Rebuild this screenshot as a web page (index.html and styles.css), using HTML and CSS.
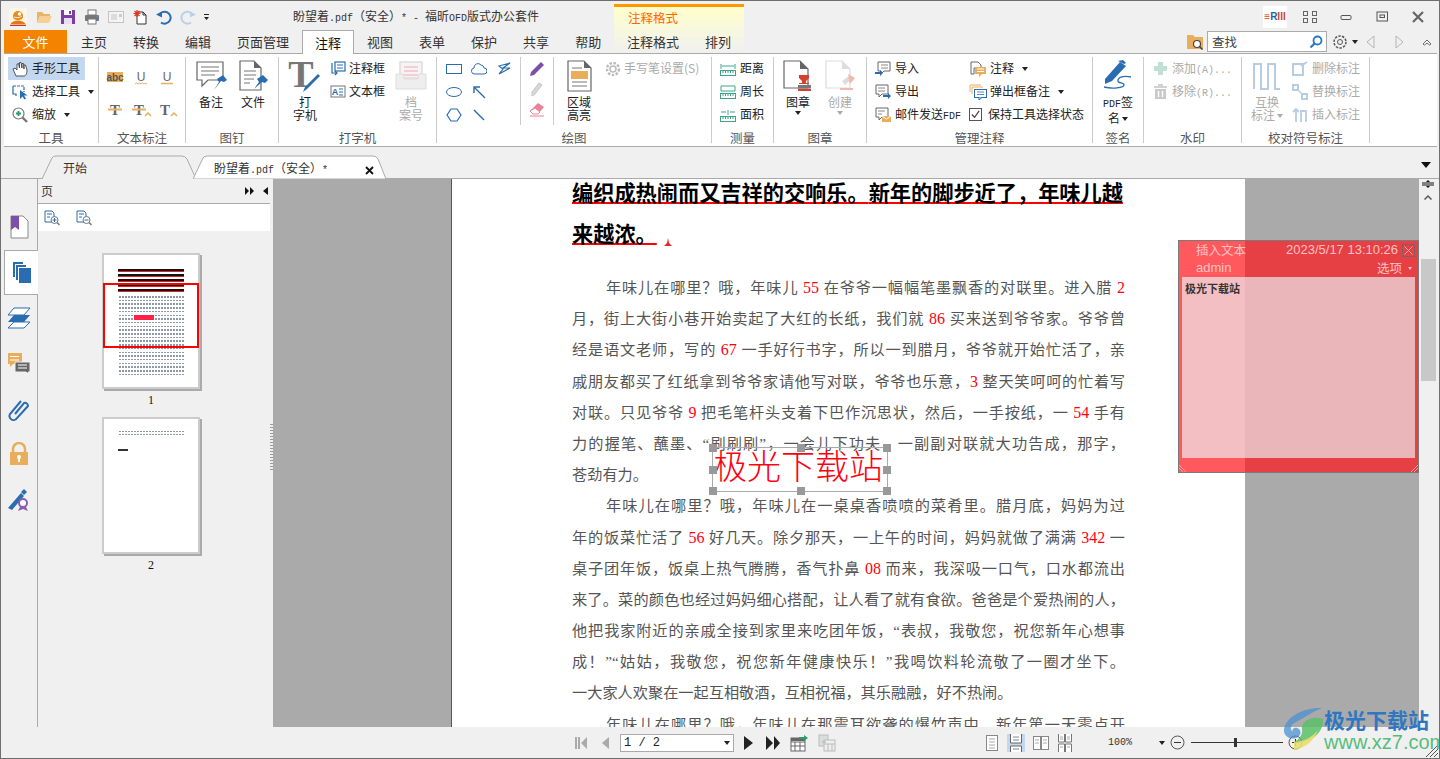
FILE: index.html
```html
<!DOCTYPE html>
<html lang="zh-CN">
<head>
<meta charset="utf-8">
<title>盼望着.pdf(安全)* - 福昕OFD版式办公套件</title>
<link rel="stylesheet" href="styles.css">
</head>
<body>
<div class="app">
  <header class="top">
    <div class="titlebar">
      <svg class="qlogo" viewBox="0 0 18 18"><rect width="18" height="18" rx="2" fill="#fff6e6"/><path d="M4 8a5 5 0 0 1 10 0c0 3-2 4-5 4s-5-1-5-4z" fill="#e88a1a"/><circle cx="10.500" cy="6" r="1.800" fill="#fff"/><path d="M5 9c2 1 6 1 8-1" fill="none" stroke="#fff" stroke-width=".8"/><path d="M1 16.500c2-3 5-4 8-4s6 1 8 4z" fill="#e0781a"/><path d="M1 17.500h16" stroke="#c33"/></svg>
      <svg class="q" viewBox="0 0 16 16"><path d="M1 3h5l2 2h6v2H4L1 14z" fill="#e9b565"/><path d="M4 7h12l-3 7H1z" fill="#f5cf94"/></svg>
      <svg class="q" viewBox="0 0 16 16"><rect x="1" y="1" width="14" height="14" fill="#7d3f9f"/><rect x="4" y="1" width="8" height="5" fill="#fff"/><rect x="9" y="2" width="2" height="3" fill="#7d3f9f"/><rect x="4" y="9" width="8" height="6" fill="#e8dff0"/></svg>
      <svg class="q" viewBox="0 0 16 16"><rect x="4" y="1" width="8" height="5" fill="#fff" stroke="#777"/><rect x="1" y="6" width="14" height="6" rx="1" fill="#777"/><rect x="4" y="10" width="8" height="5" fill="#fff" stroke="#777"/><rect x="12" y="7" width="2" height="1" fill="#4a90d9"/></svg>
      <svg class="q" viewBox="0 0 16 16"><rect x=".5" y="2.5" width="15" height="11" fill="#f4f4f4" stroke="#c4c4c4"/><path d="M3 6h6M3 8h6M3 10h6" stroke="#c4c4c4"/><rect x="11" y="5" width="3" height="3" fill="#ccc"/></svg>
      <svg class="q" viewBox="0 0 16 16"><path d="M5 3h6l3 3v9H5z" fill="#fff" stroke="#333"/><path d="M11 3v3h3" fill="none" stroke="#333"/><path d="M5 1v7M1.500 4.500h7M2.500 2l5 5M7.500 2l-5 5" stroke="#e53323" stroke-width="1.200"/></svg>
      <svg class="q" viewBox="0 0 16 16"><path d="M3 6.500a6 6 0 1 1 2 7" fill="none" stroke="#2a6cb0" stroke-width="2"/><path d="M0 5.500l6-3v6z" fill="#2a6cb0"/></svg>
      <svg class="q" viewBox="0 0 16 16"><path d="M13 6.500a6 6 0 1 0-2 7" fill="none" stroke="#b9d0e6" stroke-width="2"/><path d="M16 5.500l-6-3v6z" fill="#b9d0e6"/></svg>
      <svg class="qdrop" viewBox="0 0 6 8"><path d="M0 1h5v1H0zM0 4h5L2.500 7z" fill="#222"/></svg>
      <span class="doc-title">盼望着<span class="mono">.pdf</span>（安全）<span class="mono">* - </span>福昕<span class="mono">OFD</span>版式办公套件</span>
    </div>
    <nav class="tabs">
      <span class="tab tab-file">文件</span>
      <span class="tab">主页</span><span class="tab">转换</span><span class="tab">编辑</span><span class="tab">页面管理</span>
      <span class="tab tab-on">注释</span>
      <span class="tab">视图</span><span class="tab">表单</span><span class="tab">保护</span><span class="tab">共享</span><span class="tab">帮助</span>
    </nav>
    <div class="ctx">
      <div class="ctx-title">注释格式</div>
      <div class="ctx-tabs"><span class="tab">注释格式</span><span class="tab">排列</span></div>
    </div>
    <div class="winbar">
      <div class="erii"><span class="erii-t"><span class="er">≡</span><span class="eb">R</span><span class="er">III</span></span></div>
      <svg class="win" viewBox="0 0 36 14"><g fill="none" stroke="#666"><rect x="11.500" y="1.500" width="4" height="4"/><rect x="20.500" y="1.500" width="4" height="4"/><rect x="11.500" y="8.500" width="4" height="4"/><rect x="20.500" y="8.500" width="4" height="4"/></g></svg>
      <svg class="win" viewBox="0 0 36 14"><rect x="13" y="5.500" width="10" height="4" rx="1" fill="none" stroke="#555"/></svg>
      <svg class="win" viewBox="0 0 36 14"><rect x="13" y="2" width="10.500" height="9" fill="none" stroke="#555"/><rect x="16" y="5" width="4.500" height="2.500" fill="none" stroke="#555"/></svg>
      <svg class="win" viewBox="0 0 36 14"><path d="M13 2l10 10M23 2L13 12" stroke="#666" stroke-width="2.200"/></svg>
    </div>
    <div class="searchbar">
      <svg class="sfold" viewBox="0 0 18 16"><path d="M1 1h6l2 2h8v12H1z" fill="#e8ae5c"/><circle cx="11" cy="10" r="3.500" fill="#fff" stroke="#444" stroke-width="1.200"/><path d="M13.500 12.500l3 3" stroke="#444" stroke-width="1.600"/></svg>
      <div class="sbox"><span>查找</span><svg class="i14" viewBox="0 0 14 14"><circle cx="8.500" cy="5.500" r="4" fill="#fff" stroke="#2b78c2" stroke-width="1.800"/><path d="M5.500 8.500L1.500 12.500" stroke="#2b78c2" stroke-width="2.200"/></svg></div>
      <svg class="sgear" viewBox="0 0 16 16"><circle cx="8" cy="8" r="2.500" fill="none" stroke="#555"/><circle cx="8" cy="8" r="6" fill="none" stroke="#555" stroke-width="1.500" stroke-dasharray="2.400 1.300"/></svg>
      <span class="caret sc"></span>
      <svg class="snav" viewBox="0 0 9 14"><path d="M8 1L1 7l7 6z" fill="none" stroke="#b5b5b5"/></svg>
      <svg class="snav snav2" viewBox="0 0 9 14"><path d="M1 1l7 6-7 6z" fill="none" stroke="#b5b5b5"/></svg>
      <svg class="snav snav3" viewBox="0 0 10 8"><path d="M1 6l4-4 4 4-1.500 1L5 5 2.500 7z" fill="#fff" stroke="#444" stroke-width=".8"/></svg>
    </div>
  </header>

  <section class="ribbon">
    <div class="grp g1"><div class="gb col">
      <div class="rw hl"><svg class="i16" viewBox="0 0 16 16"><path d="M4 15L1 8l2-1 2 2V3l1.500-.500L7.500 7V1.500H9L10 7V2.500h1.500L12 8V4h1.500L15 9c0 3-1 6-3 6z" fill="#fff" stroke="#444" stroke-width=".9"/></svg>手形工具</div>
      <div class="rw"><svg class="i16" viewBox="0 0 16 16"><path d="M1 2h11v6" fill="none" stroke="#2a6cb0" stroke-width="1.200" stroke-dasharray="3 1"/><path d="M1 2v8h3v2" fill="none" stroke="#2a6cb0" stroke-width="1.200"/><path d="M8 6l0 9 2.500-2.500 2 3 1.500-1-2-3h3.500z" fill="#2a6cb0"/></svg>选择工具<span class="caret c8"></span></div>
      <div class="rw"><svg class="i16" viewBox="0 0 16 16"><circle cx="6.500" cy="6.500" r="5.500" fill="#fff" stroke="#777" stroke-width="1.200"/><path d="M4 6.500h5M6.500 4v5" stroke="#2d9c6a" stroke-width="1.800"/><path d="M10.500 10.500l4.500 4.500" stroke="#777" stroke-width="2.400"/></svg>缩放<span class="caret c8"></span></div>
    </div><div class="gl">工具</div></div>

    <div class="grp g2"><div class="gb markup">
      <svg class="i26" viewBox="0 0 26 26"><rect x="5" y="8" width="16" height="10" fill="#e8ae5c"/><text x="13" y="16.500" class="svt-b">abc</text></svg>
      <svg class="i26" viewBox="0 0 26 26"><text x="13" y="17" class="svt-u">U</text><path d="M7 20l1.500-1 1.500 1 1.500-1 1.500 1 1.500-1 1.500 1 1.500-1 1.500 1" fill="none" stroke="#e8ae5c"/></svg>
      <svg class="i26" viewBox="0 0 26 26"><text x="13" y="17" class="svt-u">U</text><path d="M7 19.500h12" stroke="#e8ae5c" stroke-width="1.500"/></svg>
      <svg class="i26" viewBox="0 0 26 26"><text x="13" y="19" class="svt-t">T</text><path d="M6 13.500h14" stroke="#e8ae5c" stroke-width="2"/></svg>
      <svg class="i26" viewBox="0 0 26 26"><text x="11" y="19" class="svt-t">T</text><path d="M4 13.500h14" stroke="#e8ae5c" stroke-width="2"/><path d="M17 20l3-3 3 3" fill="none" stroke="#e8ae5c" stroke-width="1.500"/></svg>
      <svg class="i26" viewBox="0 0 26 26"><text x="11" y="19" class="svt-t">T</text><path d="M17 20l3-3 3 3" fill="none" stroke="#e8ae5c" stroke-width="1.500"/></svg>
    </div><div class="gl">文本标注</div></div>

    <div class="grp g3"><div class="gb row">
      <div class="big"><svg class="i32" viewBox="0 0 32 32"><path d="M2 2h26v18H13l-6 6v-6H2z" fill="#fff" stroke="#666" stroke-width="1.200"/><path d="M6 7h18M6 11h18M6 15h14" stroke="#777"/><path d="M19 30l5-8-2-3 6-4 4 5-3 2-3-1z" fill="#2a6cb0"/></svg><span>备注</span></div>
      <div class="big"><svg class="i32" viewBox="0 0 32 32"><path d="M3 1h14l7 7v22H3z" fill="#fff" stroke="#666" stroke-width="1.200"/><path d="M17 1v7h7z" fill="#666"/><path d="M7 11h12M7 15h12M7 19h10M7 23h6" stroke="#777"/><path d="M17 29l5-7-2-3 6-4 5 5-3 3-3-1z" fill="#2a6cb0"/></svg><span>文件</span></div>
    </div><div class="gl">图钉</div></div>

    <div class="grp g4"><div class="gb row">
      <div class="big"><svg class="i32" viewBox="0 0 32 32"><text x="12" y="27" class="svt-big">T</text><path d="M14 32l2-5 13-13 2 2-13 13z" fill="#2a6cb0"/></svg><span>打<br>字机</span></div>
      <div class="col smcol">
        <div class="rw gap3"><svg class="i16" viewBox="0 0 16 16"><rect x="5" y="1" width="10" height="9" fill="#fff" stroke="#2a6cb0" stroke-width="1.200"/><path d="M7 4h6M7 7h6" stroke="#2a6cb0"/><path d="M2 2v10h5M5 10l2 2-2 2" fill="none" stroke="#2a6cb0" stroke-width="1.200"/></svg>注释框</div>
        <div class="rw gap3"><svg class="i16" viewBox="0 0 16 16"><rect x="1" y="2" width="14" height="11" fill="#fff" stroke="#777"/><text x="5" y="11" class="svt-a">A</text><path d="M9 5h4M9 8h4M9 11h4" stroke="#2a6cb0"/></svg>文本框</div>
      </div>
      <div class="big dis"><svg class="i32" viewBox="0 0 32 32"><path d="M5 2h22v16H5z" fill="#f4f4f4" stroke="#ddd" stroke-width="1.500"/><path d="M9 7h14M9 11h14M9 15h14" stroke="#f3c0cb" stroke-width="1.500"/><path d="M1 14h7l1 5h14l1-5h7v15H1z" fill="#eee" stroke="#ddd"/></svg><span>档<br>案号</span></div>
    </div><div class="gl">打字机</div></div>

    <div class="grp g5"><div class="gb row">
      <div class="shapes">
        <svg class="i16" viewBox="0 0 16 16"><rect x=".500" y="3.500" width="15" height="9" fill="#fff" stroke="#2a6cb0"/></svg>
        <svg class="i16" viewBox="0 0 16 16"><path d="M4 13a3 3 0 0 1-1-6 4 4 0 0 1 7-3 3.500 3.500 0 0 1 3 3 3 3 0 0 1 0 6z" fill="#fff" stroke="#2a6cb0"/></svg>
        <svg class="i16" viewBox="0 0 16 16"><path d="M3 5l11-3-7 5 7 0-11 6 4-5z" fill="#fff" stroke="#2a6cb0" stroke-width="1.200"/></svg>
        <svg class="i16" viewBox="0 0 16 16"><ellipse cx="8" cy="8" rx="7.500" ry="4.500" fill="#fff" stroke="#2a6cb0"/></svg>
        <svg class="i16" viewBox="0 0 16 16"><path d="M14 14L4 4M3 9V3h6" fill="none" stroke="#2a6cb0" stroke-width="1.400"/></svg>
        <span class="blank"></span>
        <svg class="i16" viewBox="0 0 16 16"><path d="M5 2h6l4 6-4 6H5L1 8z" fill="#fff" stroke="#2a6cb0" stroke-width="1.200"/></svg>
        <svg class="i16" viewBox="0 0 16 16"><path d="M3 3l10 10" stroke="#2a6cb0" stroke-width="1.400"/></svg>
      </div>
      <div class="pens">
        <svg class="i16" viewBox="0 0 16 16"><path d="M1 15l1-4L12 1l3 3L5 14z" fill="#7d4fa8"/></svg>
        <svg class="i16" viewBox="0 0 16 16"><path d="M3 15l0-4 7-9 3 2-7 9z" fill="#d8d8d8" stroke="#c4c4c4"/></svg>
        <svg class="i16" viewBox="0 0 16 16"><path d="M1 10l8-8 6 4-6 7H4z" fill="#ec8297"/><path d="M1 10l3 3h5l2-2-5-4z" fill="#fff" stroke="#ec8297"/><path d="M1 15h14" stroke="#ec8297"/></svg>
      </div>
      <div class="big area"><svg class="i32" viewBox="0 0 32 32"><path d="M5 1h16l7 7v23H5z" fill="#fff" stroke="#666" stroke-width="1.200"/><path d="M21 1v7h7z" fill="#666"/><rect x="8" y="11" width="17" height="8" fill="#e8ae5c"/><path d="M9 8h10M9 22h15M9 26h15" stroke="#777"/></svg><span>区域<br>高亮</span></div>
      <div class="rw dis gap3 pen-set"><svg class="i16" viewBox="0 0 16 16"><circle cx="8" cy="8" r="3" fill="none" stroke="#bbb" stroke-width="1.500"/><circle cx="8" cy="8" r="6" fill="none" stroke="#bbb" stroke-width="2.400" stroke-dasharray="2.500 1.500"/></svg>手写笔设置(S)</div>
    </div><div class="gl">绘图</div></div>

    <div class="grp g6"><div class="gb col">
      <div class="rw"><svg class="i16" viewBox="0 0 16 16"><use href="#ruler"/><path d="M1 3v5M15 3v5M2 5h12" stroke="#3da585"/></svg>距离</div>
      <div class="rw"><svg class="i16" viewBox="0 0 16 16"><use href="#ruler"/><path d="M1 2h14v5H1z" fill="none" stroke="#3da585"/></svg>周长</div>
      <div class="rw"><svg class="i16" viewBox="0 0 16 16"><use href="#ruler"/><path d="M1 5h5M10 5h5M8 3v5" stroke="#3da585"/></svg>面积</div>
    </div><div class="gl">测量</div></div>

    <div class="grp g7"><div class="gb row">
      <div class="big"><svg class="i32" viewBox="0 0 32 32"><path d="M2 1h16l8 8v19H2z" fill="#fff" stroke="#666" stroke-width="1.200"/><path d="M18 1v8h8z" fill="#666"/><path d="M17 15h10v3l-3 3v2h3v1H17v-1h3v-2l-3-3z" fill="#d5402f"/><rect x="16" y="25" width="13" height="3.500" fill="#777"/><rect x="16" y="29" width="13" height="2" fill="#d5402f"/></svg><span>图章</span><span class="caret c0"></span></div>
      <div class="big dis"><svg class="i32" viewBox="0 0 32 32"><path d="M2 1h16l8 8v19H2z" fill="#fff" stroke="#ddd" stroke-width="1.200"/><path d="M18 1v8h8z" fill="#ddd"/><path d="M18 21l7-5 3 3-7 6z" fill="#ddd"/><path d="M24 14l7 4-5 6z" fill="#f2b9ab"/><path d="M16 29h13" stroke="#f2b9ab" stroke-width="2"/></svg><span>创建</span><span class="caret c0 cg"></span></div>
    </div><div class="gl">图章</div></div>

    <div class="grp g8"><div class="gb row">
      <div class="col mcol">
        <div class="rw"><svg class="i16" viewBox="0 0 16 16"><path d="M3 1h12v9H9l-3 3v-3H3z" fill="#fff" stroke="#666"/><path d="M0 11h5V9l3 3-3 3v-2H0z" fill="#2a6cb0"/><path d="M6 4h7M6 7h7" stroke="#888"/></svg>导入</div>
        <div class="rw"><svg class="i16" viewBox="0 0 16 16"><path d="M1 1h12v9H7l-3 3v-3H1z" fill="#fff" stroke="#666"/><path d="M8 11h5V9l3 3-3 3v-2H8z" fill="#2a6cb0"/><path d="M3 4h7M3 7h7" stroke="#888"/></svg>导出</div>
        <div class="rw"><svg class="i16" viewBox="0 0 16 16"><path d="M1 1h12v9H7l-3 3v-3H1z" fill="#fff" stroke="#666"/><rect x="7" y="9" width="9" height="6" fill="#e8ae5c"/><path d="M7 9l4.500 3L16 9" fill="none" stroke="#fff"/><path d="M3 4h7M3 7h4" stroke="#888"/></svg><span>邮件发送<span class="mono">FDF</span></span></div>
      </div>
      <div class="col">
        <div class="rw gap3"><svg class="i18" viewBox="0 0 18 16"><path d="M2 1h7l3 3v3H5v6H2z" fill="#fff" stroke="#666"/><rect x="6" y="6" width="11" height="7" fill="#e8ae5c"/><path d="M8 8h7M8 10.500h7" stroke="#fff"/><path d="M10 13v3l3-3" fill="#e8ae5c"/></svg>注释<span class="caret c5"></span></div>
        <div class="rw gap3"><svg class="i18" viewBox="0 0 18 16"><path d="M1 1h11M1 1v7M3 3h11M3 3v7" fill="none" stroke="#e8ae5c"/><rect x="5.500" y="5.500" width="12" height="8" fill="#fff" stroke="#2a6cb0"/><path d="M8 8h7M8 10.500h7" stroke="#2a6cb0" stroke-width=".8"/><path d="M10 13.500v2.500l3-2.500" fill="#fff" stroke="#2a6cb0"/></svg>弹出框备注<span class="caret c5"></span></div>
        <div class="rw chk"><span class="box"><svg viewBox="0 0 12 12"><path d="M2 6l3 3 5-7" fill="none" stroke="#444" stroke-width="1.300"/></svg></span>保持工具选择状态</div>
      </div>
    </div><div class="gl">管理注释</div></div>

    <div class="grp g9"><div class="gb row">
      <div class="big wide"><svg class="i32" viewBox="0 0 32 32"><path d="M3 19L18 2l6 4-14 15-7 3z" fill="#2a6cb0"/><path d="M16 1l5-1 3 3-2 1z" fill="#2a6cb0"/><path d="M2 27c8 2 20 1 20-2s-7-1-6-5 8-4 13-3" fill="none" stroke="#2a6cb0" stroke-width="1.300"/></svg><span><span class="mono">PDF</span>签<br>名<span class="caret c2"></span></span></div>
    </div><div class="gl">签名</div></div>

    <div class="grp g10"><div class="gb col">
      <div class="rw dis"><svg class="i15" viewBox="0 0 15 15"><path d="M5 1h5v4h4v5h-4v4H5v-4H1V5h4z" fill="#bfe0d3"/></svg><span>添加<span class="mono">(A)...</span></span></div>
      <div class="rw dis"><svg class="i15" viewBox="0 0 15 15"><path d="M1 3h13M5 1h5" stroke="#c4c4c4" stroke-width="1.500"/><path d="M2 5h11v10H2z" fill="#c8c8c8"/><path d="M5.500 7v6M9.500 7v6" stroke="#fff" stroke-width="1.500"/></svg><span>移除<span class="mono">(R)...</span></span></div>
    </div><div class="gl">水印</div></div>

    <div class="grp g11"><div class="gb row">
      <div class="big dis"><svg class="i32" viewBox="0 0 32 32"><path d="M3 29V4h7v25h7V4h7v25h5" fill="none" stroke="#b8cde4" stroke-width="2"/></svg><span>互换<br>标注<span class="caret c2 cg"></span></span></div>
      <div class="col prf">
        <div class="rw dis"><svg class="i16" viewBox="0 0 16 16"><rect x="1" y="3" width="10" height="11" fill="none" stroke="#b8cde4" stroke-width="2"/><path d="M9 5l6-4" stroke="#b8cde4" stroke-width="2"/></svg>删除标注</div>
        <div class="rw dis"><svg class="i16" viewBox="0 0 16 16"><rect x="1" y="1" width="5" height="5" fill="none" stroke="#b8cde4" stroke-width="2"/><rect x="10" y="10" width="5" height="5" fill="none" stroke="#b8cde4" stroke-width="2"/><path d="M6 6l4 4" stroke="#b8cde4" stroke-width="1.500"/></svg>替换标注</div>
        <div class="rw dis"><svg class="i16" viewBox="0 0 16 16"><path d="M4 15V3M1 5l3-3 3 3M9 15V4h5v11" fill="none" stroke="#b8cde4" stroke-width="1.800"/></svg>插入标注</div>
      </div>
    </div><div class="gl">校对符号标注</div></div>
    <svg class="defs" viewBox="0 0 16 16"><defs><g id="ruler"><rect x=".5" y="9.500" width="15" height="5" fill="none" stroke="#3da585"/><path d="M3 10v2M5.500 10v2M8 10v2M10.500 10v2M13 10v2" stroke="#3da585"/></g></defs></svg>
  </section>

  <div class="doctabs">
    <div class="dt dt1"><svg class="dt-bg" viewBox="0 0 154 24" preserveAspectRatio="none"><path d="M0 24L10 3Q11 1 14 1H140Q143 1 145 4L154 24" fill="#f0f0f0" stroke="#aaa"/></svg><span class="dt-t">开始</span></div>
    <div class="dt dt2"><svg class="dt-bg" viewBox="0 0 194 24" preserveAspectRatio="none"><path d="M0 24L10 3Q11 1 14 1H180Q183 1 185 4L193 24Z" fill="#fff" stroke="#aaa"/></svg><span class="dt-t">盼望着<span class="mono">.pdf</span>（安全）<span class="mono">*</span></span><svg class="dt-x" viewBox="0 0 9 9"><path d="M1 1l7 7M8 1L1 8" stroke="#111" stroke-width="1.800"/></svg></div>
    <span class="caret dt-arrow"></span>
  </div>

  <main class="main">
    <aside class="rail">
      <div class="ri"><svg class="i20" viewBox="0 0 20 24"><path d="M2 1h12l5 5v17H2z" fill="#fff" stroke="#888"/><path d="M2 1h8v14l-4-3-4 3z" fill="#7d4fa8"/></svg></div>
      <div class="ri ri-on"><svg class="i20" viewBox="0 0 20 22"><path d="M1 1h10v2H3v13H1z" fill="#2a6cb0"/><path d="M4 4h10v2H6v13H4z" fill="#2a6cb0"/><rect x="7" y="7" width="12" height="15" fill="#2a6cb0"/></svg></div>
      <div class="ri"><svg class="i24" viewBox="0 0 24 22"><path d="M7 1h16l-6 7H1zM7 15h16l-6 6H1z" fill="#fff" stroke="#2a6cb0"/><path d="M7 8h16l-6 7H1z" fill="#2a6cb0"/></svg></div>
      <div class="ri"><svg class="i24" viewBox="0 0 24 22"><path d="M1 1h14v11H6l-3 3v-3H1z" fill="#e8ae5c"/><path d="M3 4.500h9M3 8h9" stroke="#fff"/><path d="M8 10h15v10h-2v2l-2-2H8z" fill="#666" stroke="#f0f0f0"/><path d="M11 13h9M11 16h9" stroke="#fff"/></svg></div>
      <div class="ri"><svg class="i24" viewBox="0 0 24 24"><path d="M8 17l9-11a3 3 0 0 1 4 3L10 21a4 4 0 0 1-7-4L14 4" fill="none" stroke="#2a6cb0" stroke-width="2"/></svg></div>
      <div class="ri"><svg class="i20" viewBox="0 0 20 24"><path d="M4 11V7a6 6 0 0 1 12 0v4" fill="none" stroke="#e8ae5c" stroke-width="2.500"/><rect x="1" y="10" width="18" height="13" fill="#e8ae5c"/><circle cx="10" cy="15" r="2" fill="#fff"/><rect x="9" y="15" width="2" height="5" fill="#fff"/></svg></div>
      <div class="ri"><svg class="i24" viewBox="0 0 24 24"><path d="M1 20L14 5l3 3L5 22z" fill="#2a6cb0"/><path d="M14 4l3-3 3 3-3 3z" fill="#2a6cb0"/><circle cx="16" cy="15" r="4" fill="#fff" stroke="#8a5cb0" stroke-width="2"/><path d="M13 19l-2 4 5-2 5 2-2-4" fill="#8a5cb0"/></svg></div>
    </aside>
    <section class="panel">
      <div class="ph"><span class="ph-t">页</span><svg class="ph-a" viewBox="0 0 9 8"><path d="M0 0l4 4-4 4zM5 0l4 4-4 4z" fill="#111"/></svg><svg class="ph-b" viewBox="0 0 5 8"><path d="M5 0L0 4l5 4z" fill="#111"/></svg></div>
      <div class="pt">
        <svg class="i16" viewBox="0 0 16 16"><path d="M1 1h7l2 2v9H1z" fill="#fff" stroke="#2a6cb0"/><path d="M3 4h5M3 7h3" stroke="#2a6cb0"/><circle cx="10.500" cy="10" r="3.500" fill="#fff" stroke="#777"/><path d="M8.500 10h4M10.500 8v4" stroke="#2a6cb0"/><path d="M13 12.500l2.500 2.500" stroke="#777" stroke-width="1.400"/></svg>
        <svg class="i16" viewBox="0 0 16 16"><path d="M1 1h7l2 2v9H1z" fill="#fff" stroke="#2a6cb0"/><path d="M3 4h5M3 7h3" stroke="#2a6cb0"/><circle cx="10.500" cy="10" r="3.500" fill="#fff" stroke="#777"/><path d="M8.500 10h4" stroke="#2a6cb0"/><path d="M13 12.500l2.500 2.500" stroke="#777" stroke-width="1.400"/></svg>
      </div>
      <div class="thumbs">
        <div class="th">
          <div class="th-h"></div><div class="th-bd"><div class="th-mark"></div></div>
          <div class="th-view"></div>
        </div>
        <div class="th-n">1</div>
        <div class="th th2"><div class="th-l1"></div><div class="th-l2"></div></div>
        <div class="th-n">2</div>
      </div>
    </section>
    <div class="split"><span class="dots"></span></div>
    <section class="docarea">
      <article class="page">
        <h1 class="hd"><span class="wv">编织成热闹而又吉祥的交响乐。</span><span class="wv">新年的脚步近了，年味儿越</span><br><span class="wv">来越浓。</span><svg class="ins" viewBox="0 0 8 8"><path d="M4 0l1 5 3 3H0l3-3z" fill="#e22"/></svg></h1>
        <div class="bd">
          <div class="ln ind">年味儿在哪里？哦，年味儿 <b>55</b> 在爷爷一幅幅笔墨飘香的对联里。进入腊 <b>2</b></div>
          <div class="ln">月，街上大街小巷开始卖起了大红的长纸，我们就 <b>86</b> 买来送到爷爷家。爷爷曾</div>
          <div class="ln">经是语文老师，写的 <b>67</b> 一手好行书字，所以一到腊月，爷爷就开始忙活了，亲</div>
          <div class="ln">戚朋友都买了红纸拿到爷爷家请他写对联，爷爷也乐意，<b>3</b> 整天笑呵呵的忙着写</div>
          <div class="ln">对联。只见爷爷 <b>9</b> 把毛笔杆头支着下巴作沉思状，然后，一手按纸，一 <b>54</b> 手有</div>
          <div class="ln">力的握笔、蘸墨、“刷刷刷”，一会儿下功夫，一副副对联就大功告成，那字，</div>
          <div class="ln end">苍劲有力。</div>
          <div class="ln ind">年味儿在哪里？哦，年味儿在一桌桌香喷喷的菜肴里。腊月底，妈妈为过</div>
          <div class="ln">年的饭菜忙活了 <b>56</b> 好几天。除夕那天，一上午的时间，妈妈就做了满满 <b>342</b> 一</div>
          <div class="ln">桌子团年饭，饭桌上热气腾腾，香气扑鼻 <b>08</b> 而来，我深吸一口气，口水都流出</div>
          <div class="ln">来了。菜的颜色也经过妈妈细心搭配，让人看了就有食欲。爸爸是个爱热闹的人，</div>
          <div class="ln">他把我家附近的亲戚全接到家里来吃团年饭，“表叔，我敬您，祝您新年心想事</div>
          <div class="ln">成！”“姑姑，我敬您，祝您新年健康快乐！”我喝饮料轮流敬了一圈才坐下。</div>
          <div class="ln end">一大家人欢聚在一起互相敬酒，互相祝福，其乐融融，好不热闹。</div>
          <div class="ln ind">年味儿在哪里？哦，年味儿在那震耳欲聋的爆竹声中。新年第一天零点开</div>
        </div>
      </article>
    </section>
    <div class="vscroll">
      <svg class="vs-split" viewBox="0 0 12 8"><path d="M0 3h12M0 5h12" stroke="#111"/><path d="M6 0l2 2H4zM6 8l2-2H4z" fill="#111"/></svg>
      <svg class="vs-up" viewBox="0 0 8 6"><path d="M0 5l4-4 4 4-1 1-3-3-3 3z" fill="#555"/></svg>
      <div class="vs-thumb"></div>
    </div>

    <div class="tbox">极光下载站<i class="h h1"></i><i class="h h2"></i><i class="h h3"></i><i class="h h4"></i><i class="h h5"></i><i class="h h6"></i><i class="h h7"></i><i class="h h8"></i></div>

    <div class="note">
      <div class="nr1"><span class="nt">插入文本</span><span class="nd">2023/5/17 13:10:26</span><svg class="nx" viewBox="0 0 13 13"><rect x=".5" y=".5" width="12" height="12" fill="none" stroke="#8a5a60"/><path d="M2.500 2.500l8 8M10.500 2.500l-8 8" stroke="#ffc0c0" stroke-width=".8"/></svg></div>
      <div class="nr2"><span class="na">admin</span><span class="no">选项</span><span class="caret nc"></span></div>
      <div class="nb">极光下载站</div>
      <div class="nf"><svg class="ng" viewBox="0 0 8 8"><path d="M0 1l7 7M0 4l4 4" stroke="#ffb5b5" stroke-width=".8"/></svg><svg class="ng" viewBox="0 0 8 8"><path d="M8 1L1 8M8 4L4 8" stroke="#ffb5b5" stroke-width=".8"/></svg></div>
    </div>
  </main>

  <footer class="status">
    <div class="st nav">
      <svg class="s16" viewBox="0 0 16 16"><path d="M1 2h2v12H1zM4 2h2v12H4zM13 2v12L7 8z" fill="#aaa"/></svg>
      <svg class="s10" viewBox="0 0 10 16"><path d="M9 2v12L2 8z" fill="#aaa"/></svg>
      <div class="pg"><span>1 / 2</span><span class="caret pgc"></span></div>
      <svg class="s10" viewBox="0 0 10 16"><path d="M0 1v14l9-7z" fill="#222"/></svg>
      <svg class="s16" viewBox="0 0 16 16"><path d="M2 1v14l7-7zM10 1l6 7-6 7z" fill="#222"/></svg>
      <svg class="s18" viewBox="0 0 18 18"><rect x="1" y="4" width="14" height="13" fill="#fff" stroke="#666"/><path d="M1 8h14M5 8v9M10 8v9M1 12h14" stroke="#666"/><rect x="1" y="4" width="14" height="3" fill="#666"/><path d="M9 3h5V1l4 3-4 3V5H9z" fill="#2d9c6a"/></svg>
      <svg class="s18" viewBox="0 0 18 18"><rect x="1" y="1" width="9" height="11" fill="#ddd" stroke="#bbb"/><rect x="6" y="6" width="11" height="11" fill="#eee" stroke="#bbb"/><path d="M6 10h11M10 10v7M14 10v7" stroke="#bbb"/><path d="M4 8h4" stroke="#9cd0b8" stroke-width="1.500"/></svg>
    </div>
    <div class="st views">
      <svg class="s16" viewBox="0 0 16 18"><rect x="2.500" y="1.500" width="11" height="15" fill="#fff" stroke="#888"/><path d="M5 5h6M5 8h6M5 11h6M5 14h6" stroke="#aaa"/></svg>
      <div class="v-on"><svg class="s16" viewBox="0 0 16 18"><path d="M2.500 0v9h11V0M2.500 18v-6h11v6" fill="#fff" stroke="#666"/><path d="M5 3h6M5 6h6M5 15h6" stroke="#888"/></svg></div>
      <svg class="s18" viewBox="0 0 18 18"><rect x="1.500" y="2.500" width="7" height="13" fill="#fff" stroke="#888"/><rect x="9.500" y="2.500" width="7" height="13" fill="#fff" stroke="#888"/><path d="M3 6h4M3 9h4M11 6h4M11 9h4" stroke="#aaa"/></svg>
      <svg class="s16" viewBox="0 0 16 18"><path d="M1.500 0v8h6V0M8.500 0v8h6V0M1.500 18v-8h6v8M8.500 18v-8h6v8" fill="#fff" stroke="#777"/><path d="M3 3h3M3 5h3M10 3h3M10 5h3M3 13h3M10 13h3" stroke="#aaa"/></svg>
    </div>
    <span class="pct">100%</span>
    <span class="caret zc"></span>
    <svg class="zb" viewBox="0 0 15 15"><circle cx="7.500" cy="7.500" r="6.500" fill="none" stroke="#555"/><path d="M4 7.500h7" stroke="#333"/></svg>
    <div class="slider"><i></i></div>
    <svg class="zb" viewBox="0 0 15 15"><circle cx="7.500" cy="7.500" r="6.500" fill="none" stroke="#555"/><path d="M4 7.500h7M7.500 4v7" stroke="#333"/></svg>
    <svg class="grip" viewBox="0 0 12 12"><path d="M0 12L12 0M4 12l8-8M8 12l4-4" stroke="#555"/></svg>
  </footer>

  <div class="wm">
    <svg class="wm-logo" viewBox="0 0 44 46"><path d="M40 1C22 0 4 10 2 22c-1 8 8 12 14 8 4-3 3-8-1-9-3-1-6 2-4 4-4-3-2-8 3-10C22 11 30 5 40 1z" fill="#4a90d0" opacity=".75"/><path d="M41 12C30 8 19 14 20 22c1 5-2 10-8 13 12 2 30-6 29-23z" fill="#5bbf68" opacity=".85"/><path d="M12 35c8 0 18-4 24-12-3 9-12 18-24 20z" fill="#e9dd6a" opacity=".9"/></svg>
    <div class="wm-tx"><div class="wm-a">极光下载站</div><div class="wm-b">www.xz7.com</div></div>
  </div>
</div>
</body>
</html>
```

FILE: styles.css
```css
* { box-sizing: border-box; }
html, body { margin: 0; height: 100%; overflow: hidden; }
body { font: 12px/1.2 "Noto Sans CJK SC", "Noto Sans", sans-serif; color: #222; background: #f0f0f0; }
svg { display: block; flex: none; }
.mono { font-family: "Liberation Mono", monospace; font-size: 10px; }
.app { position: relative; width: 1440px; height: 759px; overflow: hidden; display: flex; flex-direction: column; border: 1px solid #6e6e6e; background: #f0f0f0; }

/* top area */
.top { display: grid; grid-template-columns: 613px 130px 1fr; grid-template-rows: 29px 23px; flex: none; height: 52px; }
.titlebar { display: flex; align-items: center; padding: 3px 0 0 8px; gap: 8px; }
.qlogo { width: 18px; height: 18px; margin-right: 1px; }
.q { width: 16px; height: 16px; }
.qdrop { width: 6px; height: 8px; }
.doc-title { margin-left: 75px; font-size: 12px; color: #333; white-space: nowrap; }
.tabs { grid-column: 1; grid-row: 2; display: flex; padding-left: 3px; position: relative; z-index: 2; }
.tab { flex: none; padding: 0 13px; font-size: 13px; line-height: 23px; height: 23px; color: #333; white-space: nowrap; }
.tab-file { width: 63px; background: #f38300; color: #fff; text-align: center; padding: 0; margin-right: 1px; }
.tab-on { background: #fff; border: 1px solid #aaa; border-bottom: 0; padding: 0 12px; height: 24px; width: 52px; color: #111; position: relative; z-index: 3; }
.ctx { grid-column: 2; grid-row: 1 / span 2; margin-top: 3px; border-top: 3px solid #f90; background: linear-gradient(#ffffcc, #f0f0f0); }
.ctx-title { height: 23px; padding-left: 14px; line-height: 22px; color: #f60; font-size: 12.500px; }
.ctx-tabs { display: flex; }
.winbar { grid-column: 3; grid-row: 1; display: flex; justify-content: flex-end; align-items: center; padding: 3px 3px 0 0; }
.erii { width: 24px; height: 22px; background: #fff; margin-right: 5px; display: flex; align-items: center; justify-content: center; }
.erii-t { font: bold 10px/1 "Liberation Sans", sans-serif; white-space: nowrap; }
.er { color: #d5452a; }
.eb { color: #1f5fa8; }
.win { width: 36px; height: 14px; }
.searchbar { grid-column: 3; grid-row: 2; display: flex; align-items: center; padding-left: 442px; }
.sfold { width: 18px; height: 16px; margin-right: 3px; }
.sbox { width: 120px; height: 21px; background: #fff; border: 1px solid #aaa; display: flex; align-items: center; justify-content: space-between; padding: 0 3px 0 4px; font-size: 12.500px; color: #444; }
.i14 { width: 14px; height: 14px; }
.sgear { width: 16px; height: 16px; margin-left: 5px; }
.sc { margin-left: 4px; }
.snav { width: 9px; height: 14px; margin-left: 8px; }
.snav2 { margin-left: 20px; }
.snav3 { width: 10px; height: 8px; margin-left: 18px; }
.caret { display: inline-block; width: 0; height: 0; border: 3px solid transparent; border-top: 4px solid #222; border-bottom: 0; flex: none; }

/* ribbon */
.ribbon { flex: none; height: 94px; margin: 0 2px 0 3px; background: #fff; border-top: 1px solid #aaa; border-bottom: 1px solid #aaa; display: flex; position: relative; }
.defs { width: 0; height: 0; }
.grp { flex: none; height: 86px; margin-top: 3px; border-right: 1px solid #ccc; display: flex; flex-direction: column; }
.gb { height: 73px; flex: none; }
.gl { text-align: center; line-height: 16px; height: 13px; color: #555; font-size: 12.500px; white-space: nowrap; }
.row { display: flex; }
.col { display: flex; flex-direction: column; }
.g1 { width: 95px; } .g1 .gb { padding-left: 4px; }
.g2 { width: 87px; }
.g3 { width: 93px; } .g3 .gb { padding-left: 4px; }
.g4 { width: 158px; } .g4 .gb { padding-left: 5px; }
.g5 { width: 275px; } .g5 .gb { padding-left: 4px; }
.g6 { width: 62px; } .g6 .gb { padding-left: 8px; }
.g7 { width: 93px; } .g7 .gb { padding-left: 3px; }
.g8 { width: 226px; } .g8 .gb { padding-left: 8px; }
.g9 { width: 51px; }
.g10 { width: 98px; } .g10 .gb { padding-left: 9px; }
.g11 { width: 128px; } .g11 .gb { padding-left: 4px; }
.rw { display: flex; align-items: center; height: 23px; gap: 4px; white-space: nowrap; color: #222; }
.gap3 { gap: 3px; }
.hl { background: #c3d7f0; width: 77px; padding-left: 4px; }
.g1 .rw:not(.hl) { padding-left: 4px; }
.c8 { margin-left: 4px; }
.c5 { margin-left: 5px; }
.c2 { margin-left: 2px; vertical-align: 2px; }
.c0 { display: block; margin: 3px auto 0; }
.cg { border-top-color: #aaa; }
.i15 { width: 15px; height: 15px; }
.i16 { width: 16px; height: 16px; }
.i18 { width: 18px; height: 16px; }
.i20 { width: 20px; height: 24px; }
.i24 { width: 24px; height: 24px; }
.i26 { width: 26px; height: 26px; }
.i32 { width: 32px; height: 32px; margin: 3px auto 3px; overflow: visible; }
.big { width: 42px; flex: none; text-align: center; line-height: 13px; color: #222; }
.wide { width: 50px; }
.area { width: 50px; }
.dis, .dis .rw, .rw.dis { color: #aaa; }
.markup { display: grid; grid-template-columns: repeat(3, 26px); grid-auto-rows: 32px; padding: 7px 0 0 3px; }
.svt-b { font: bold 10px "Liberation Sans", sans-serif; text-anchor: middle; fill: #555; }
.svt-u { font: 12px "Liberation Sans", sans-serif; text-anchor: middle; fill: #666; }
.svt-t { font: bold 15px "Liberation Serif", serif; text-anchor: middle; fill: #666; }
.svt-big { font: bold 38px "Liberation Serif", serif; text-anchor: middle; fill: #777; }
.svt-a { font: bold 9px "Liberation Sans", sans-serif; text-anchor: middle; fill: #2a6cb0; }
.smcol { width: 60px; margin-left: 4px; }
.shapes { width: 80px; height: 68px; display: grid; grid-template-columns: repeat(3, 25px); grid-auto-rows: 23px; align-items: center; justify-items: center; border-right: 1px solid #ccc; }
.pens { width: 33px; height: 68px; display: flex; flex-direction: column; align-items: center; justify-content: space-around; border-right: 1px solid #ccc; padding: 2px 0 6px; }
.pen-set { margin-left: 1px; }
.mcol { width: 94px; }
.chk { gap: 6px; }
.box { width: 13px; height: 13px; border: 1px solid #555; background: #fff; display: block; }
.box svg { width: 11px; height: 11px; }
.prf { margin-left: 4px; }

/* document tabs */
.doctabs { flex: none; height: 32px; display: flex; align-items: flex-end; border-bottom: 1px solid #aaa; padding-left: 41px; position: relative; }
.dt { position: relative; height: 24px; flex: none; margin-bottom: -1px; }
.dt1 { width: 154px; padding-left: 21px; }
.dt2 { width: 194px; margin-left: -3px; padding-left: 21px; display: flex; }
.dt-bg { position: absolute; inset: 0; width: 100%; height: 100%; }
.dt-t { position: relative; line-height: 26px; color: #333; white-space: nowrap; }
.dt-x { position: absolute; left: 172px; top: 11px; width: 9px; height: 9px; }
.dt-arrow { position: absolute; right: 8px; top: 15px; border-width: 5px; border-top-width: 6px; border-top-color: #111; border-bottom-width: 0; }

/* main */
.main { flex: 1; display: flex; position: relative; overflow: hidden; min-height: 0; }
.rail { width: 36px; flex: none; padding-top: 25px; position: relative; z-index: 2; }
.ri { height: 45.500px; display: flex; align-items: center; justify-content: center; }
.ri-on { background: #fff; border: 1px solid #aaa; border-right: 0; margin-left: 3px; margin-right: -1px; }
.panel { width: 233px; flex: none; display: flex; flex-direction: column; border-left: 1px solid #aaa; }
.ph { height: 24px; display: flex; align-items: center; padding-left: 3px; }
.ph-t { color: #333; line-height: 22px; }
.ph-a { width: 9px; height: 8px; margin-left: 192px; }
.ph-b { width: 5px; height: 8px; margin-left: 9px; }
.pt { height: 28px; background: #fff; border-top: 1px solid #aaa; display: flex; align-items: center; gap: 16px; padding-left: 6px; }
.thumbs { flex: 1; padding: 22px 0 0 64px; }
.th { width: 98px; height: 136px; background: #fff; border: 2px solid #ccc; box-shadow: 2px 2px 0 #aaa; padding: 14px 14px 0; position: relative; }
.th-h { height: 23px; background: repeating-linear-gradient(#111 0 2.500px, #d22 2.500px 3.500px, #fff 3.500px 5px); }
.th-bd { height: 81px; margin-top: 4px; position: relative; background: repeating-linear-gradient(90deg, #fff 0 1px, transparent 1px 3px), repeating-linear-gradient(#8d99a8 0 1.500px, #fff 1.500px 3.700px); }
.th-mark { position: absolute; left: 16px; top: 19px; width: 20px; height: 5px; background: #f24; }
.th-view { position: absolute; left: -1px; top: 28px; width: 96px; height: 65px; border: 2px solid #f00; }
.th2 { height: 137px; padding-top: 12px; }
.th-l1 { height: 4px; background: repeating-linear-gradient(90deg, #fff 0 1px, transparent 1px 3px), repeating-linear-gradient(#8d99a8 0 1px, #fff 1px 2.500px); }
.th-l2 { height: 2px; width: 10px; margin-top: 14px; background: #333; }
.th-n { width: 98px; text-align: center; font: 12px/16px "Liberation Serif", serif; margin: 3px 0 9px; color: #111; }
.split { width: 3px; flex: none; background: #f0f0f0; display: flex; align-items: center; }
.dots { width: 3px; height: 46px; margin-top: -12px; background: repeating-linear-gradient(#999 0 1px, transparent 1px 3px); }
.docarea { width: 1146px; flex: none; background: #aaa; padding-left: 178px; overflow: hidden; }
.page { width: 794px; height: 100%; background: #fff; border-left: 1px solid #555; padding: 0 120px; overflow: hidden; }
.hd { margin: -8px 0 0; font-size: 21.200px; line-height: 41px; font-weight: 700; color: #000; white-space: nowrap; font-family: "Noto Sans CJK SC", sans-serif; }
.wv { text-decoration: underline solid #f00 2px; text-underline-offset: 1px; text-decoration-skip-ink: none; }
.ins { display: inline-block; width: 8px; height: 8px; margin-left: 7px; vertical-align: -4px; }
.bd { margin-top: 19px; font: 15.200px/31.200px "Liberation Serif", "Noto Sans CJK SC", serif; color: #555; }
.bd b { font-weight: 400; color: #f01; font-size: 16px; }
.ln { height: 31.200px; text-align: justify; text-align-last: justify; white-space: nowrap; }
.ind { padding-left: 34px; }
.end { text-align-last: left; }
.vscroll { width: 18px; flex: none; display: flex; flex-direction: column; align-items: center; background: #f0f0f0; }
.vs-split { width: 12px; height: 8px; margin-top: 1px; }
.vs-up { width: 8px; height: 6px; margin-top: 6px; }
.vs-thumb { width: 15px; height: 122px; margin-top: 59px; background: #c8c8c8; }

/* overlays */
.tbox { position: absolute; left: 711px; top: 268px; width: 176px; height: 45px; border: 1px solid #aaa; color: #f01; font-size: 34px; line-height: 34px; padding-right: 4px; text-align: center; font-weight: 300; white-space: nowrap; }
.h { position: absolute; width: 8px; height: 8px; background: #999; }
.h1 { left: -4px; top: -4px; } .h2 { left: 84px; top: -4px; } .h3 { right: -4px; top: -4px; }
.h4 { left: -4px; top: 18px; } .h5 { right: -4px; top: 18px; }
.h6 { left: -4px; bottom: -4px; } .h7 { left: 84px; bottom: -4px; } .h8 { right: -4px; bottom: -4px; }
.note { position: absolute; left: 1177px; top: 61px; width: 241px; height: 233px; background: rgba(255, 19, 26, .7); border: 1px solid #7a7a7a; display: flex; flex-direction: column; color: #ffc2c2; }
.nr1 { height: 18px; display: flex; align-items: center; padding-left: 17px; flex: none; }
.nt { font-size: 12.500px; white-space: nowrap; line-height: 16px; }
.nd { margin-left: 40px; font: 13px/16px "Liberation Sans", sans-serif; white-space: nowrap; }
.nx { width: 13px; height: 13px; margin-left: 4px; }
.nr2 { height: 18px; display: flex; align-items: center; padding: 0 6px 0 17px; flex: none; }
.na { font: 13px/16px "Liberation Sans", sans-serif; }
.no { margin-left: auto; font-size: 12.500px; line-height: 16px; }
.nc { margin-left: 6px; border-width: 2px; border-top-width: 3px; border-top-color: #ffc2c2; }
.nb { height: 181px; margin: 0 3px; background: rgba(238, 249, 250, .64); color: #333; font-weight: 700; font-size: 11px; line-height: 22px; padding-left: 3px; flex: none; }
.nf { flex: 1; display: flex; justify-content: space-between; align-items: flex-end; }
.ng { width: 8px; height: 8px; }

/* status bar */
.status { flex: none; height: 31px; display: flex; align-items: center; position: relative; }
.st { display: flex; align-items: center; flex: none; }
.nav { margin-left: 573px; gap: 10px; }
.s10 { width: 10px; height: 16px; }
.s16 { width: 16px; height: 18px; }
.s18 { width: 18px; height: 18px; }
.pg { width: 114px; height: 18px; background: #fff; border: 1px solid #aaa; display: flex; align-items: center; justify-content: space-between; padding: 0 3px; font: 12px "Liberation Mono", monospace; color: #222; }
.views { margin-left: 148px; gap: 7px; }
.v-on { background: #c3d7f0; width: 18px; height: 18px; padding-left: 1px; }
.pct { margin-left: 35px; width: 25px; font: 10px "Liberation Mono", monospace; color: #333; white-space: nowrap; }
.zc { margin-left: 26px; margin-right: 5px; }
.zb { width: 15px; height: 15px; }
.slider { width: 92px; height: 1px; background: #333; margin: 0 5px 0 6px; position: relative; }
.slider i { position: absolute; left: 43px; top: -4px; width: 3px; height: 9px; background: #333; }
.grip { position: absolute; right: 1px; bottom: 1px; width: 12px; height: 12px; }
.wm { position: absolute; left: 1281px; top: 706px; display: flex; z-index: 5; }
.wm-logo { width: 44px; height: 46px; }
.wm-tx { margin-left: -2px; }
.wm-a { font: 700 21px/25px "Noto Sans CJK SC", sans-serif; color: #2f77c0; white-space: nowrap; }
.wm-b { font: 20px/21px "Liberation Sans", sans-serif; color: #58bd7c; white-space: nowrap; }
```
